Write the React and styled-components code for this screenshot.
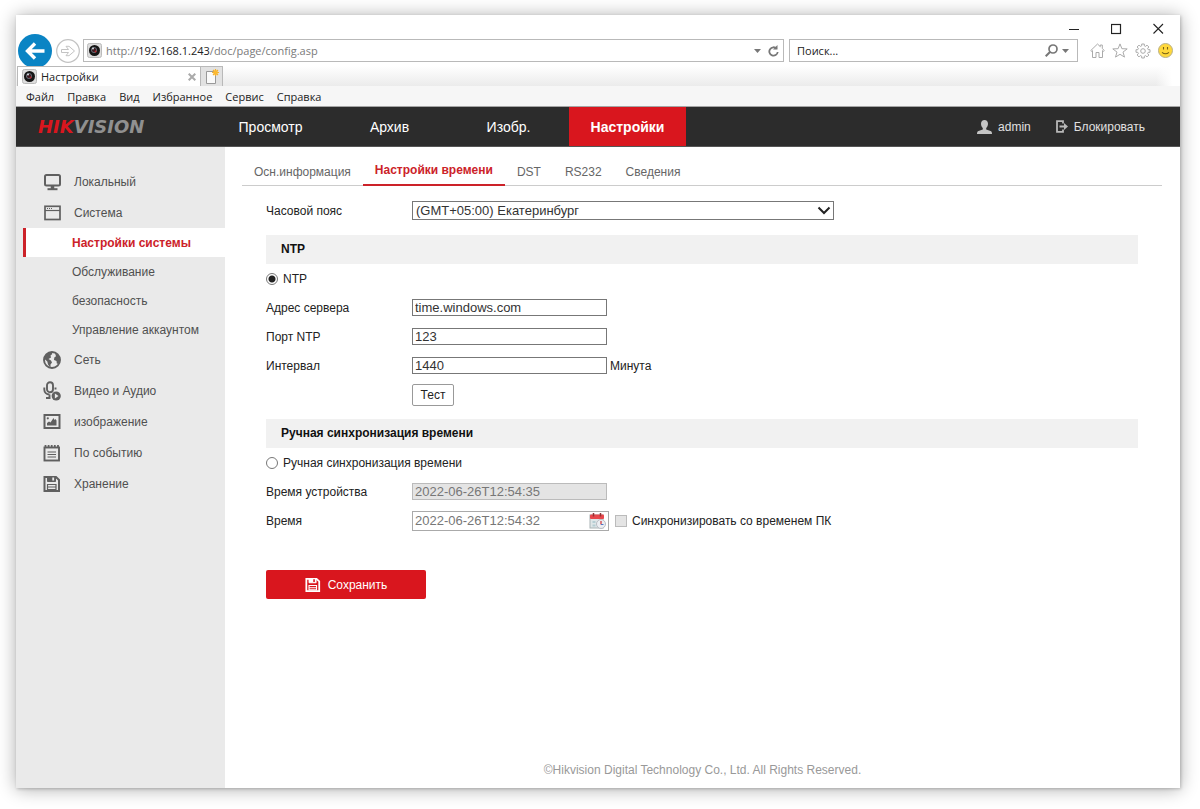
import React from 'react';
import styled, { createGlobalStyle, css } from 'styled-components';

const red = '#d9161e';
const textRed = '#cc2229';
const ui = '"Liberation Sans", Arial, sans-serif';
const chromeFont = '"Open Sans", "Noto Sans", sans-serif';

const Global = createGlobalStyle`
  *, *::before, *::after { box-sizing: border-box; }
  body { margin: 0; background: #fff; font-family: ${ui}; font-size: 12px; color: #222; }
  button, input, select { font: inherit; color: inherit; margin: 0; }
  button { cursor: pointer; }
  a { color: inherit; text-decoration: none; }
  svg { display: block; flex: none; }
`;

const Desktop = styled.div`
  min-height: 100vh;
  padding: 15px 20px 21px 16px;
  display: flex;
`;

const Window = styled.div`
  flex: 1;
  min-width: 0;
  display: flex;
  flex-direction: column;
  background: #fff;
  box-shadow: 1px 1px 3px rgba(0, 0, 0, 0.2), 0 1px 17px rgba(0, 0, 0, 0.33);
`;

/* Browser chrome */
const TitleBar = styled.div`
  height: 20px;
  padding-right: 16px;
  display: flex;
  justify-content: flex-end;
  align-items: flex-end;
  gap: 31px;
`;

const PlainButton = styled.button`
  border: 0;
  padding: 0;
  background: none;
  display: flex;
  align-items: center;
  justify-content: center;
`;

const AddressRow = styled.div`
  height: 31px;
  padding: 0 7px 0 2px;
  display: flex;
  align-items: center;
  font-family: ${chromeFont};
  font-size: 11px;
`;

const BackButton = styled(PlainButton)`
  align-self: flex-end;
  height: 31px;
  align-items: flex-end;
`;

const ForwardButton = styled(PlainButton)`
  margin: 0 3px 0 4px;
`;

const Field = styled.div`
  height: 23px;
  border: 1px solid #b9b9b9;
  display: flex;
  align-items: center;
  gap: 4px;
  padding: 0 4px 0 3px;
  background: #fff;
`;

const AddressField = styled(Field)`
  flex: 1;
`;

const Address = styled.div`
  flex: 1;
  color: #7a7a7a;
  b { font-weight: 400; color: #222; }
`;

const AddressButtons = styled.div`
  display: flex;
  align-items: center;
  gap: 7px;
`;

const SearchField = styled(Field)`
  width: 289px;
  margin-left: 5px;
  padding: 0 8px 0 7px;
`;

const SearchInput = styled.input`
  flex: 1;
  min-width: 0;
  border: 0;
  padding: 0;
  outline: 0;
  background: none;
  &::placeholder { color: #222; opacity: 1; }
`;

const BrowserTools = styled.div`
  display: flex;
  gap: 7px;
  margin-left: 12px;
`;

const TabStrip = styled.div`
  height: 20px;
  padding-left: 1px;
  display: flex;
  background: linear-gradient(to right, transparent calc(100% - 24px), #fff calc(100% - 8px)), linear-gradient(#fff, #ebebeb);
  font-family: ${chromeFont};
  font-size: 11px;
`;

const BrowserTab = styled.div`
  width: 184px;
  border: 1px solid #b9b9b9;
  border-bottom: 0;
  background: #fff;
  padding: 0 4px;
  display: flex;
  align-items: center;
  gap: 4px;
  span { flex: 1; }
`;

const NewTab = styled(PlainButton)`
  width: 22px;
  background: #e2e2e2;
  border: 1px solid #b9b9b9;
  border-width: 1px 1px 0 0;
`;

const MenuBar = styled.div`
  height: 21px;
  padding: 0 10px;
  display: flex;
  gap: 13px;
  background: #f6f6f6;
  border-bottom: 1px solid #a5a5a5;
`;

const MenuItem = styled(PlainButton)`
  font-family: ${chromeFont};
  font-size: 11px;
`;

/* Device pages */
const Header = styled.header`
  height: 40px;
  background: #2c2c2c;
  border-bottom: 1px solid #555;
  color: #fff;
  display: flex;
`;

const Logo = styled.a`
  width: 196px;
  padding-left: 22px;
  display: flex;
  align-items: center;
  font: italic bold 18px/20px "DejaVu Sans", sans-serif;
  color: #909090;
  span { color: ${red}; }
`;

const Nav = styled.nav`
  flex: 1;
  display: flex;
  gap: 2px;
`;

const NavLink = styled.a`
  width: 117px;
  display: flex;
  align-items: center;
  justify-content: center;
  font-size: 14px;
  ${(p) => p.$active && css`background: ${red}; font-weight: 700;`}
`;

const Account = styled.div`
  display: flex;
  align-items: center;
  gap: 25px;
  padding-right: 35px;
  color: #e0e0e0;
`;

const AccountLink = styled.a`
  display: flex;
  align-items: center;
  gap: 6px;
`;

const Body = styled.div`
  flex: 1;
  display: flex;
`;

const Sidebar = styled.nav`
  width: 209px;
  padding-top: 19px;
  background: #eaeaea;
  color: #505050;
`;

const SideLink = styled.a`
  height: 31px;
  padding-left: 27px;
  display: flex;
  align-items: center;
  gap: 13px;
  svg { color: #606060; }
`;

const SubLink = styled.a`
  height: 29px;
  margin-left: 7px;
  padding-left: 46px;
  border-left: 3px solid transparent;
  display: flex;
  align-items: center;
  ${(p) => p.$active && css`
    background: #fff;
    border-color: ${textRed};
    color: ${textRed};
    font-weight: 700;
  `}
`;

const Content = styled.main`
  flex: 1;
  min-width: 0;
  display: flex;
  flex-direction: column;
`;

const Tabs = styled.nav`
  height: 39px;
  margin: 0 18px 0 17px;
  border-bottom: 1px solid #ccc;
  display: flex;
  align-items: flex-end;
`;

const TabLink = styled.a`
  height: 26px;
  padding: 0 12px;
  margin-bottom: -1px;
  line-height: 25px;
  color: #666;
  ${(p) => p.$active && css`
    height: 29px;
    color: ${textRed};
    font-weight: 700;
    line-height: 27px;
    border-bottom: 2px solid ${textRed};
  `}
`;

const Form = styled.form`
  padding: 10px 42px 0 41px;
`;

const Row = styled.div`
  height: 29px;
  display: flex;
  align-items: center;
`;

const RowLabel = styled.label`
  width: 146px;
`;

const SectionTitle = styled.h2`
  height: 29px;
  margin: 10px 0 0;
  padding-left: 15px;
  background: #f1f1f1;
  color: #111;
  font-size: 12px;
  line-height: 29px;
`;

const SelectBox = styled.div`
  width: 422px;
  display: grid;
  align-items: center;
  > * { grid-area: 1 / 1; }
  svg { justify-self: end; margin-right: 3px; pointer-events: none; }
`;

const Select = styled.select`
  appearance: none;
  height: 19px;
  border: 1px solid #777;
  border-radius: 0;
  padding: 0 3px;
  background: #fff;
  font-size: 13px;
  color: #333;
`;

const TextInput = styled.input`
  width: 195px;
  height: 17px;
  border: 1px solid #777;
  border-radius: 0;
  padding: 0 2px;
  background: #fff;
  font-size: 13px;
  color: #333;
  &:disabled { background: #e4e4e4; border-color: #bbb; color: #777; }
`;

const Unit = styled.span`
  margin-left: 3px;
`;

const DateField = styled.div`
  width: 197px;
  height: 20px;
  border: 1px solid #aaa;
  display: flex;
  align-items: center;
  padding-right: 2px;
`;

const DateInput = styled(TextInput)`
  flex: 1;
  min-width: 0;
  border: 0;
  color: #777;
`;

const Radio = styled.input`
  appearance: none;
  width: 12px;
  height: 12px;
  margin-right: 5px;
  border: 1px solid #777;
  border-radius: 50%;
  background: #fff;
  &:checked { background: radial-gradient(#222 0 3px, #fff 4px); }
`;

const Checkbox = styled.input`
  appearance: none;
  width: 12px;
  height: 12px;
  border: 1px solid #bbb;
  background: #e4e4e4;
`;

const CheckLabel = styled.label`
  display: flex;
  align-items: center;
  gap: 5px;
  margin-left: 6px;
`;

const TestButton = styled.button`
  height: 22px;
  width: 42px;
  margin-left: 146px;
  padding: 0;
  background: #fff;
  border: 1px solid #999;
  border-radius: 2px;
`;

const SaveButton = styled.button`
  width: 160px;
  height: 29px;
  margin-top: 35px;
  padding: 0;
  display: flex;
  align-items: center;
  justify-content: center;
  gap: 7px;
  border: 0;
  border-radius: 2px;
  background: ${red};
  color: #fff;
`;

const Footer = styled.footer`
  margin-top: auto;
  padding-bottom: 9px;
  text-align: center;
  line-height: 18px;
  color: #999;
`;

/* Icons */
const Svg = ({ w, h = w, children, ...rest }) => (
  <svg width={w} height={h} viewBox={`0 0 ${w} ${h}`} fill="none" stroke="currentColor" aria-hidden="true" {...rest}>
    {children}
  </svg>
);

const CameraIcon = () => (
  <Svg w={15} stroke="none">
    <rect x=".5" y=".5" width="14" height="14" rx="2" fill="#ddd" stroke="#bbb" />
    <circle cx="7.500" cy="7.500" r="5.500" fill="#161616" />
    <circle cx="7" cy="7" r="2.600" fill="#3b1a20" stroke="#6e7f8a" strokeWidth=".8" />
    <circle cx="6" cy="5.600" r="1" fill="#d7dde2" />
    <circle cx="8.600" cy="8.400" r="1" fill="#b3262e" />
  </Svg>
);

const BackIcon = () => (
  <Svg w={34} h={32}>
    <circle cx="17" cy="17" r="17" fill="#0a84c4" stroke="none" />
    <path d="M26.500 17H10.500M17 9.500l-7.500 7.500 7.500 7.500" stroke="#fff" strokeWidth="3.400" />
  </Svg>
);

const ForwardIcon = () => (
  <Svg w={24} stroke="#c3c3c3">
    <circle cx="12" cy="12" r="11.300" strokeWidth="1.200" />
    <path d="M5.500 10.500h7L10 7.300h3l5.500 4.700-5.500 4.700h-3l2.500-3.200h-7z" />
  </Svg>
);

const CaretIcon = () => (
  <Svg w={7} h={4} stroke="none"><path d="M0 0h7L3.500 4z" fill="#777" /></Svg>
);

const ReloadIcon = () => (
  <Svg w={11} h={12} stroke="#777" strokeWidth="1.800">
    <path d="M8.600 3.600A4.200 4.200 0 1 0 9.700 7" /><path d="M9.500 0v4.500H5z" fill="#777" stroke="none" />
  </Svg>
);

const SearchIcon = () => (
  <Svg w={13} stroke="#777" strokeWidth="1.700">
    <circle cx="8" cy="5" r="4" /><path d="M5 8L.7 12.300" strokeWidth="2" />
  </Svg>
);

const HomeIcon = () => (
  <Svg w={15} stroke="#aaa">
    <path d="M.8 7.500L7.500 1l2.800 2.700V2h2v3.600l2 1.900-.8.900-1-.8v6.900H9V9.500H6v5H2.500V7.600l-1 .8z" />
  </Svg>
);

const StarIcon = () => (
  <Svg w={16} h={15} stroke="#aaa">
    <path d="M8 .9l1.900 4.800 5.300.2-4.200 3.200 1.500 5L8 11.300l-4.500 2.800 1.500-5L.8 5.900l5.300-.2z" />
  </Svg>
);

const GearIcon = () => (
  <Svg w={16} stroke="#aaa">
    <path d="M6.700 1h2.600v1.800l1.400.6L12 2.100 13.900 4l-1.300 1.300.6 1.400H15v2.600h-1.800l-.6 1.400 1.300 1.300-1.900 1.900-1.300-1.300-1.400.6V15H6.700v-1.800l-1.400-.6L4 13.900 2.100 12l1.300-1.300-.6-1.400H1V6.700h1.800l.6-1.400L2.100 4 4 2.100l1.300 1.300 1.400-.6z" />
    <circle cx="8" cy="8" r="2.300" />
  </Svg>
);

const SmileIcon = () => (
  <Svg w={15}>
    <circle cx="7.500" cy="7.500" r="7" fill="#ffd83b" stroke="#b8b08a" />
    <path d="M5.500 4v2.500M9.500 4v2.500M4 9.300q3.500 3 7 0" stroke="#776014" strokeWidth="1.100" />
  </Svg>
);

const CloseTabIcon = () => (
  <Svg w={8} stroke="#aaa" strokeWidth="2"><path d="M.7.7l6.600 6.600M7.300.7L.7 7.300" /></Svg>
);

const NewTabIcon = () => (
  <Svg w={14} h={16}>
    <path d="M1.500 2.500h9v12h-9z" fill="#fafafa" stroke="#999" />
    <path d="M10.500 0v7M7 3.500h7M8 1l5 5M13 1L8 6" stroke="#f4b02c" strokeWidth="1.200" />
    <circle cx="10.500" cy="3.500" r="2.200" fill="#fcb92f" stroke="none" />
  </Svg>
);

const UserIcon = () => (
  <Svg w={15} h={14} stroke="none" fill="#c4c4c4">
    <path d="M7.500 0C9.600 0 11 1.500 11 3.700c0 1.900-.8 3.500-1.800 4.300v1.400l4.300 1.500c1 .4 1.500 1 1.500 3.100H0c0-2.100.5-2.700 1.500-3.100l4.300-1.500V8C4.800 7.200 4 5.600 4 3.700 4 1.500 5.400 0 7.500 0z" />
  </Svg>
);

const LogoutIcon = () => (
  <Svg w={12} h={13} stroke="#b8b8b8">
    <path d="M7 3.500V1.200H1v10.600h6V9.500" strokeWidth="1.800" />
    <path d="M3.500 5.500h4.500V3l4 3.500L8 10V7.500H3.500z" fill="#b8b8b8" stroke="none" />
  </Svg>
);

const MonitorIcon = () => (
  <Svg w={18} strokeWidth="2">
    <rect x="2" y="2" width="15" height="10.500" rx="1.500" />
    <path d="M9.500 13v3" strokeWidth="3.500" /><path d="M4.500 16.200h10" />
  </Svg>
);

const WindowIcon = () => (
  <Svg w={18} strokeWidth="1.700">
    <rect x="2" y="2.300" width="15" height="13.200" />
    <path d="M2 6.500h15" strokeWidth="1.200" /><path d="M4 4.500h6" strokeDasharray="1 1" strokeWidth="1" />
  </Svg>
);

const GlobeIcon = () => (
  <Svg w={18}>
    <circle cx="9" cy="9" r="8" strokeWidth="1.900" />
    <path d="M1.500 8C1.500 4 4.500 1.300 8.500 1L9.300 3 7.500 4.500 8 6.500 5.500 8 8 9.500 9 11.500 7.500 13.500V17L5 13.500 4.300 10.500zM12 2l3.500 2.500L17 9l-1.500 4-1.700-.5-.3-2.500-2.500-1L11.300 6.500l1.700-1.300z" fill="currentColor" stroke="none" />
  </Svg>
);

const MicIcon = () => (
  <Svg w={18} h={20} strokeWidth="1.900">
    <rect x="4" y="1.200" width="6" height="10" rx="3" />
    <path d="M1.300 6.500v2c0 3 2.200 5 5.200 5M12.500 6.500v2M6.500 13.500V17M3 17h4.500" />
    <circle cx="13.200" cy="15" r="4.600" fill="currentColor" stroke="none" />
    <path d="M11.900 12.600v4.800l3.600-2.400z" fill="#eaeaea" stroke="none" />
  </Svg>
);

const ImageIcon = () => (
  <Svg w={18}>
    <rect x="1.500" y="2" width="15" height="13" strokeWidth="2" />
    <path d="M4 12.500V10l2-1.500 1.500 1 3-4.500 1 2 1-1 1 1.500v5z" fill="currentColor" stroke="none" />
    <circle cx="4.800" cy="5.300" r="1.100" fill="currentColor" stroke="none" />
  </Svg>
);

const EventIcon = () => (
  <Svg w={18}>
    <rect x="1.500" y="3.500" width="14.500" height="13" strokeWidth="1.900" />
    <path d="M2.500 1v3M5.600 1v3M8.700 1v3M11.800 1v3M15 1v3" strokeWidth="1.800" />
    <path d="M4.500 8h8.500M4.500 10.500h8.500M4.500 13h8.500" />
  </Svg>
);

const DiskIcon = ({ size = 18 }) => (
  <svg width={size} height={size} viewBox="0 0 18 18" fill="none" stroke="currentColor" aria-hidden="true">
    <path d="M1.500 2H13l3 3v11H1.500z" strokeWidth="2" />
    <path d="M4.500 2v4.500h8V2z" fill="currentColor" />
    <path d="M10.200 2.500v3" stroke={size < 18 ? red : '#eaeaea'} strokeWidth="1.800" />
    <path d="M4.500 9.500h8.500v5H4.500zM5 12h8" strokeWidth="1.200" />
  </svg>
);

const ChevronIcon = () => (
  <Svg w={14} h={9} stroke="#222" strokeWidth="2"><path d="M1.500 1.500L7 7l5.500-5.500" /></Svg>
);

const CalendarIcon = () => (
  <Svg w={17} h={16} stroke="none">
    <rect x="1" y="2" width="13" height="13" fill="#dfe6e8" stroke="#a9b3b5" />
    <rect x="1" y="1.500" width="14" height="4.500" rx="1" fill="#e8474c" />
    <path d="M4.500 0v3.500M11.500 0v3.500" stroke="#8f3335" strokeWidth="1.500" />
    <path d="M3.500 8h3v2h-3zM3.500 11.500h3v2h-3z" fill="#b5cdd3" />
    <circle cx="12" cy="11" r="4.500" fill="#eceef2" stroke="#b9bcc4" />
    <path d="M12 8v3.500" stroke="#d23c42" strokeWidth="1.300" /><path d="M12 11.500h2.500" stroke="#4c78c8" />
  </Svg>
);

const browserMenu = ['Файл', 'Правка', 'Вид', 'Избранное', 'Сервис', 'Справка'];
const sections = ['Просмотр', 'Архив', 'Изобр.', 'Настройки'];
const pageTabs = ['Осн.информация', 'Настройки времени', 'DST', 'RS232', 'Сведения'];
const sideMenu = [
  { text: 'Локальный', Icon: MonitorIcon },
  {
    text: 'Система',
    Icon: WindowIcon,
    children: ['Настройки системы', 'Обслуживание', 'безопасность', 'Управление аккаунтом'],
  },
  { text: 'Сеть', Icon: GlobeIcon },
  { text: 'Видео и Аудио', Icon: MicIcon },
  { text: 'изображение', Icon: ImageIcon },
  { text: 'По событию', Icon: EventIcon },
  { text: 'Хранение', Icon: DiskIcon },
];

function Browser() {
  return (
    <>
      <TitleBar>
        <PlainButton aria-label="Свернуть"><Svg w={11} h={12} stroke="#222"><path d="M0 6.500h10" /></Svg></PlainButton>
        <PlainButton aria-label="Развернуть"><Svg w={11} h={12} stroke="#222"><rect x=".5" y="1.500" width="9" height="9" strokeWidth="1.200" /></Svg></PlainButton>
        <PlainButton aria-label="Закрыть"><Svg w={11} h={12} stroke="#222"><path d="M.5 1l9.500 9.500M10 1L.5 10.500" strokeWidth="1.100" /></Svg></PlainButton>
      </TitleBar>
      <AddressRow>
        <BackButton aria-label="Назад"><BackIcon /></BackButton>
        <ForwardButton aria-label="Вперёд"><ForwardIcon /></ForwardButton>
        <AddressField>
          <CameraIcon />
          <Address role="textbox" aria-label="Адрес">http://<b>192.168.1.243</b>/doc/page/config.asp</Address>
          <AddressButtons>
            <PlainButton aria-label="Журнал адресов"><CaretIcon /></PlainButton>
            <PlainButton aria-label="Обновить"><ReloadIcon /></PlainButton>
          </AddressButtons>
        </AddressField>
        <SearchField>
          <SearchInput aria-label="Поиск" placeholder="Поиск..." />
          <PlainButton aria-label="Найти"><SearchIcon /></PlainButton>
          <PlainButton aria-label="Параметры поиска"><CaretIcon /></PlainButton>
        </SearchField>
        <BrowserTools>
          <PlainButton aria-label="Домой"><HomeIcon /></PlainButton>
          <PlainButton aria-label="Избранное"><StarIcon /></PlainButton>
          <PlainButton aria-label="Параметры"><GearIcon /></PlainButton>
          <PlainButton aria-label="Отзыв"><SmileIcon /></PlainButton>
        </BrowserTools>
      </AddressRow>
      <TabStrip>
        <BrowserTab>
          <CameraIcon />
          <span>Настройки</span>
          <PlainButton aria-label="Закрыть вкладку"><CloseTabIcon /></PlainButton>
        </BrowserTab>
        <NewTab aria-label="Новая вкладка"><NewTabIcon /></NewTab>
      </TabStrip>
      <MenuBar>
        {browserMenu.map((item) => <MenuItem key={item}>{item}</MenuItem>)}
      </MenuBar>
    </>
  );
}

function TimeSettings() {
  return (
    <Form onSubmit={(e) => e.preventDefault()}>
      <Row>
        <RowLabel htmlFor="zone">Часовой пояс</RowLabel>
        <SelectBox>
          <Select id="zone" defaultValue="5">
            <option value="5">(GMT+05:00) Екатеринбург</option>
          </Select>
          <ChevronIcon />
        </SelectBox>
      </Row>

      <SectionTitle>NTP</SectionTitle>
      <Row>
        <Radio type="radio" name="mode" id="ntp" defaultChecked />
        <label htmlFor="ntp">NTP</label>
      </Row>
      <Row>
        <RowLabel htmlFor="server">Адрес сервера</RowLabel>
        <TextInput id="server" defaultValue="time.windows.com" />
      </Row>
      <Row>
        <RowLabel htmlFor="port">Порт NTP</RowLabel>
        <TextInput id="port" defaultValue="123" />
      </Row>
      <Row>
        <RowLabel htmlFor="interval">Интервал</RowLabel>
        <TextInput id="interval" defaultValue="1440" />
        <Unit>Минута</Unit>
      </Row>
      <Row>
        <TestButton type="button">Тест</TestButton>
      </Row>

      <SectionTitle>Ручная синхронизация времени</SectionTitle>
      <Row>
        <Radio type="radio" name="mode" id="manual" />
        <label htmlFor="manual">Ручная синхронизация времени</label>
      </Row>
      <Row>
        <RowLabel htmlFor="device">Время устройства</RowLabel>
        <TextInput id="device" disabled defaultValue="2022-06-26T12:54:35" />
      </Row>
      <Row>
        <RowLabel htmlFor="time">Время</RowLabel>
        <DateField>
          <DateInput id="time" defaultValue="2022-06-26T12:54:32" />
          <PlainButton type="button" aria-label="Выбрать дату"><CalendarIcon /></PlainButton>
        </DateField>
        <CheckLabel>
          <Checkbox type="checkbox" disabled />
          Синхронизировать со временем ПК
        </CheckLabel>
      </Row>
      <SaveButton type="submit"><DiskIcon size={16} />Сохранить</SaveButton>
    </Form>
  );
}

export default function App() {
  return (
    <Desktop>
      <Global />
      <Window>
        <Browser />
        <Header>
          <Logo href="#"><span>HIK</span>VISION</Logo>
          <Nav>
            {sections.map((text) => (
              <NavLink key={text} href="#" $active={text === 'Настройки'}>{text}</NavLink>
            ))}
          </Nav>
          <Account>
            <AccountLink href="#"><UserIcon />admin</AccountLink>
            <AccountLink href="#"><LogoutIcon />Блокировать</AccountLink>
          </Account>
        </Header>
        <Body>
          <Sidebar>
            {sideMenu.map(({ text, Icon, children = [] }) => (
              <React.Fragment key={text}>
                <SideLink href="#"><Icon />{text}</SideLink>
                {children.map((child, i) => (
                  <SubLink key={child} href="#" $active={i === 0}>{child}</SubLink>
                ))}
              </React.Fragment>
            ))}
          </Sidebar>
          <Content>
            <Tabs>
              {pageTabs.map((text, i) => (
                <TabLink key={text} href="#" $active={i === 1}>{text}</TabLink>
              ))}
            </Tabs>
            <TimeSettings />
            <Footer>©Hikvision Digital Technology Co., Ltd. All Rights Reserved.</Footer>
          </Content>
        </Body>
      </Window>
    </Desktop>
  );
}
